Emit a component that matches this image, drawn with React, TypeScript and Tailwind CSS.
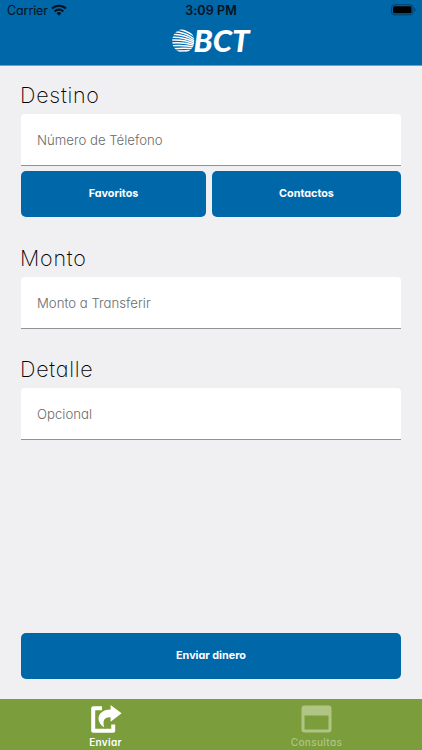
import clsx from "clsx"

const StatusBar = () => {
    return (
        <div className="relative flex h-[22px] justify-between font-[Inter] text-[12.5px] leading-[22px] text-[#04121f]">
            <div className="flex gap-1 pl-[7px]">
                <span className="w-10 whitespace-nowrap tracking-[-0.1px]">Carrier</span>
                <svg width="16" height="12" viewBox="0 0 16 12" className="mt-[4px]">
                    <g fill="none" stroke="currentColor" strokeWidth="2.1">
                        <path d="M1 4.6a10 10 0 0 1 14 0" />
                        <path d="M3.7 7.4a6.1 6.1 0 0 1 8.6 0" />
                    </g>
                    <path d="M5.6 9.2a3.4 3.4 0 0 1 4.8 0L8 11.7z" fill="currentColor" />
                </svg>
            </div>
            <span className="absolute inset-x-0 text-center text-[12.5px] font-semibold tracking-[0.1px]">3:09 PM</span>
            <svg width="26" height="12" viewBox="0 0 26 12" className="mt-[4px] mr-[5px]">
                <rect x="0.5" y="0.8" width="21.5" height="10" rx="2.8" fill="none" stroke="#033c66" />
                <rect x="2" y="2.3" width="18.5" height="7" rx="1.4" fill="#000" />
                <path d="M23.3 4v3.6c1.6-.6 1.6-3 0-3.6z" fill="#033c66" />
            </svg>
        </div>
    )
}

const Logo = () => {
    return (
        <svg width="80" height="28" viewBox="0 0 80 28" className="mx-auto mt-[6px] overflow-visible">
            <defs>
                <clipPath id="globe">
                    <ellipse cx="12.2" cy="13" rx="11" ry="11.8" />
                </clipPath>
            </defs>
            <g clipPath="url(#globe)" fill="none" stroke="#fff" strokeWidth="1.5">
                <path d="M5 1q11 1 19 8" />
                <path d="M2 3.4q13 .6 22 8" />
                <path d="M0 6.3q14-.2 24 7" />
                <path d="M0 9.2q14-.6 24 5.6" />
                <path d="M0 12.1q14-.8 24 4.2" />
                <path d="M0 15q14-1 24 2.8" />
                <path d="M0 17.9q14-1 24 1.4" />
                <path d="M0 20.8q14-1 24 0" />
                <path d="M0 23.6q14-.8 24-1" />
            </g>
            <text
                x="22.5"
                y="23.5"
                fill="#fff"
                fontFamily="Lato, sans-serif"
                fontSize="29.5"
                fontWeight="900"
                fontStyle="italic"
                textLength="56"
                lengthAdjust="spacingAndGlyphs"
            >
                BCT
            </text>
        </svg>
    )
}

const Field = ({ label, placeholder }: { label: string; placeholder: string }) => {
    return (
        <label className="block">
            <div className="-ml-px h-[37px] text-[21.5px] leading-[37px] font-extralight tracking-[0.75px] text-black">{label}</div>
            <input
                placeholder={placeholder}
                className="block h-[52px] w-full rounded-t-[4px] border-b border-[#929294] bg-white px-4 text-[13.2px] font-light text-black outline-none placeholder:text-[#6b6b6b] placeholder:opacity-100"
            />
        </label>
    )
}

const Button = ({ children, className }: { children: string; className?: string }) => {
    return (
        <button className={clsx("h-[46px] rounded-[5px] bg-[#0067a9] text-[10.8px] font-bold text-white", className)}>
            {children}
        </button>
    )
}

const TabBar = () => {
    return (
        <div className="flex h-[51px] bg-[#7c9d3b] font-[Inter] text-[10px] leading-3 font-medium tracking-[0.3px] text-white">
            <div className="flex flex-1 flex-col items-center pt-[6px]">
                <svg width="32" height="29" viewBox="0 0 32 29">
                    <path d="M12 3.2H3.2v22.6h20V19.5" fill="none" stroke="#fff" strokeWidth="4" strokeLinejoin="round" />
                    <path
                        d="M20.6 0 31.6 8.2 20.6 16.8v-4.4c-6.4-.4-8.2 3.2-6.4 9.8C5.4 17 6.6 4.6 20.6 4.4z"
                        fill="#fff"
                        stroke="#7c9d3b"
                        strokeWidth="1.6"
                        paintOrder="stroke"
                    />
                </svg>
                <span className="mt-[2px] font-semibold">Enviar</span>
            </div>
            <div className="flex flex-1 flex-col items-center pt-[6px] text-[#b0c584]">
                <svg width="31" height="29" viewBox="0 0 31 29">
                    <path
                        d="M3.5 0.5h24a3 3 0 0 1 3 3v21a3 3 0 0 1-3 3h-24a3 3 0 0 1-3-3v-21a3 3 0 0 1 3-3zm0 10v14h24v-14z"
                        fill="currentColor"
                        fillRule="evenodd"
                    />
                </svg>
                <span className="mt-[2px] tracking-[0.35px]">Consultas</span>
            </div>
        </div>
    )
}

export default function App() {
    return (
        <div className="flex h-[750px] w-[422px] flex-col overflow-hidden bg-[#f0f0f3] font-[Inter] [font-feature-settings:'cv11']">
            <header className="h-[66px] border-b border-[#68a2c9] bg-[#0067a9]">
                <StatusBar />
                <Logo />
            </header>
            <main className="flex flex-1 flex-col pt-[11px] pr-[21px] pb-5 pl-[21px]">
                <Field label="Destino" placeholder="Número de Télefono" />
                <div className="mt-[5px] mb-[23px] flex gap-[6px]">
                    <Button className="w-[185px]">Favoritos</Button>
                    <Button className="flex-1">Contactos</Button>
                </div>
                <Field label="Monto" placeholder="Monto a Transferir" />
                <div className="h-[22px]" />
                <Field label="Detalle" placeholder="Opcional" />
                <Button className="mt-auto">Enviar dinero</Button>
            </main>
            <TabBar />
        </div>
    )
}
